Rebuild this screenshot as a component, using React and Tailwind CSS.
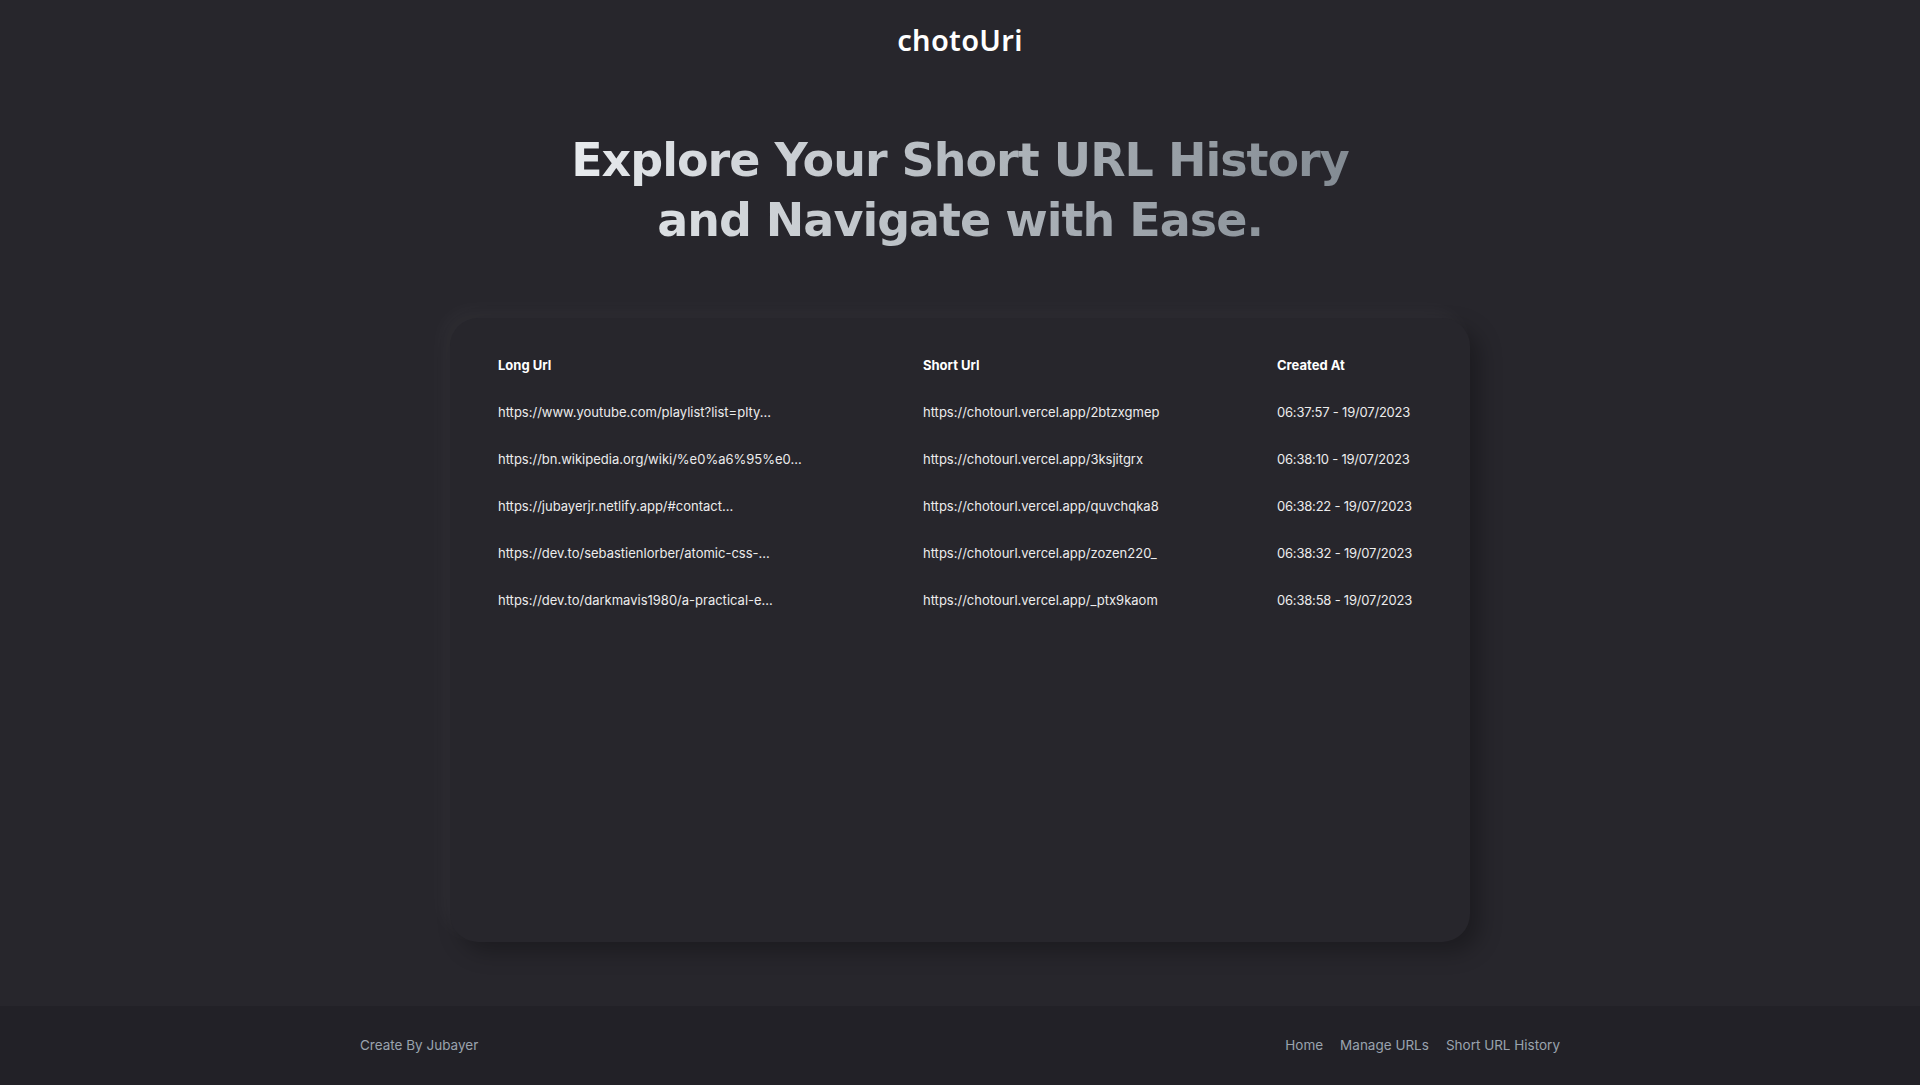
import React from "react";

const rows = [
  ["https://www.youtube.com/playlist?list=plty...", "https://chotourl.vercel.app/2btzxgmep", "06:37:57 - 19/07/2023"],
  ["https://bn.wikipedia.org/wiki/%e0%a6%95%e0...", "https://chotourl.vercel.app/3ksjitgrx", "06:38:10 - 19/07/2023"],
  ["https://jubayerjr.netlify.app/#contact...", "https://chotourl.vercel.app/quvchqka8", "06:38:22 - 19/07/2023"],
  ["https://dev.to/sebastienlorber/atomic-css-...", "https://chotourl.vercel.app/zozen220_", "06:38:32 - 19/07/2023"],
  ["https://dev.to/darkmavis1980/a-practical-e...", "https://chotourl.vercel.app/_ptx9kaom", "06:38:58 - 19/07/2023"],
];

export default function App() {
  return (
    <div className="min-h-screen flex flex-col bg-[#27262c] font-['Inter','Noto_Sans',sans-serif]">
      <header className="h-20 flex items-center justify-center">
        <span className="text-[29px] font-semibold text-white font-['Noto_Sans','Open_Sans',sans-serif] tracking-[0.3px]">chotoUri</span>
      </header>

      <main className="flex-1 flex flex-col items-center pt-[50px]">
        <h1 className="text-center text-[46px] leading-[60px] font-bold bg-gradient-to-r from-[#e8ebee] to-[#838b93] bg-clip-text text-transparent font-['DejaVu_Sans','Inter',sans-serif] tracking-[-1px]">
          Explore Your Short URL History
          <br />
          and Navigate with Ease.
        </h1>

        <div className="mt-[68px] w-[1020px] h-[624px] rounded-[28px] bg-[#27262c] shadow-[-8px_-8px_20px_rgba(255,255,255,0.035),10px_10px_22px_rgba(0,0,0,0.28)] pt-6 px-12">
          <div className="grid grid-cols-[425px_354px_1fr] text-[13px] text-white">
            <div className="h-[47px] flex items-center font-bold">Long Url</div>
            <div className="h-[47px] flex items-center font-bold">Short Url</div>
            <div className="h-[47px] flex items-center font-bold">Created At</div>
            {rows.map((r, i) => (
              <React.Fragment key={i}>
                <div className="h-[47px] flex items-center text-[#ececec]">{r[0]}</div>
                <div className="h-[47px] flex items-center text-[#ececec]">{r[1]}</div>
                <div className="h-[47px] flex items-center text-[#ececec] tracking-[-0.2px]">{r[2]}</div>
              </React.Fragment>
            ))}
          </div>
        </div>
      </main>

      <footer className="mt-16 h-[79px] bg-[#222127] flex items-center">
        <div className="w-[1200px] mx-auto flex items-center justify-between text-[13.5px] text-[#9aa3ae]">
          <span>Create By Jubayer</span>
          <nav className="flex items-center gap-[17px]">
            <a>Home</a>
            <a>Manage URLs</a>
            <a>Short URL History</a>
          </nav>
        </div>
      </footer>
    </div>
  );
}
